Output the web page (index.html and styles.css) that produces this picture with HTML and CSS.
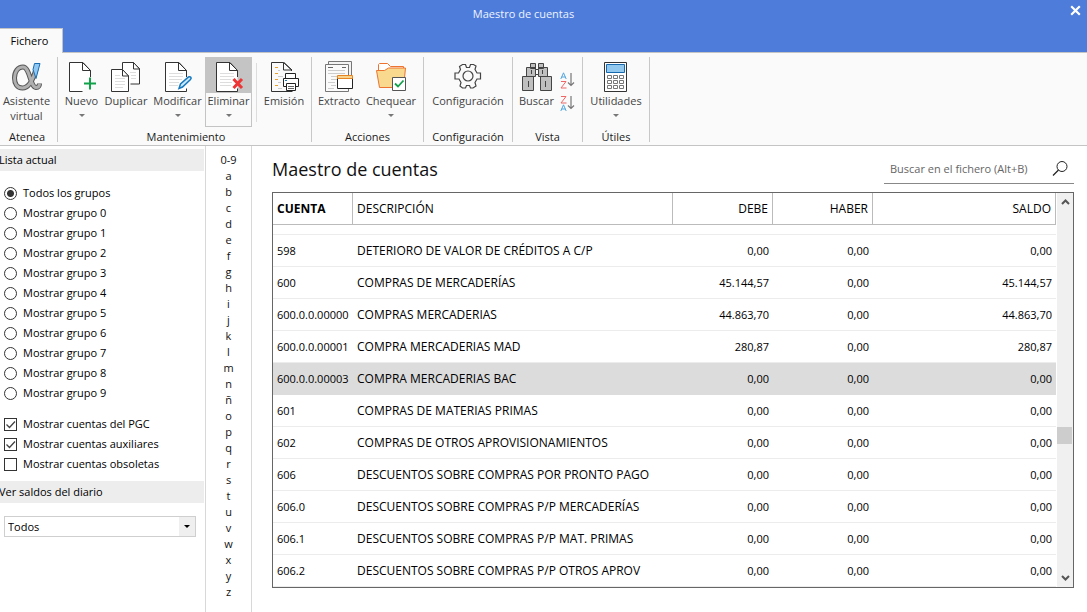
FILE: index.html
```html
<!DOCTYPE html>
<html lang="es">
<head>
<meta charset="utf-8">
<title>Maestro de cuentas</title>
<link rel="stylesheet" href="styles.css">
</head>
<body>
<header class="titlebar">
  <div class="titlebar-text">Maestro de cuentas</div>
  <button class="close" aria-label="Cerrar"><svg width="11" height="11" viewBox="0 0 11 11"><path d="M1.2 1.2l8.6 8.6M9.8 1.2L1.2 9.8" stroke="#fff" stroke-width="2.2" fill="none"/></svg></button>
  <button class="tab">Fichero</button>
</header>

<nav class="ribbon">
  <section class="group g-atenea">
    <div class="tools">
      <button class="tool">
        <svg width="32" height="32" viewBox="0 0 32 32" fill="none"><path d="M25 9C22 20 18 28 11.500 28C6 28 3.500 23.500 3.500 18C3.500 11.500 7 7 12 7C19 7 19 27 25 27.500C27.500 27.500 28.500 25.500 28.500 23.500" stroke="#555" stroke-width="5"/><path d="M25 9C22 20 18 28 11.500 28C6 28 3.500 23.500 3.500 18C3.500 11.500 7 7 12 7C19 7 19 27 25 27.500C27.500 27.500 28.500 25.500 28.500 23.500" stroke="#b0b0b0" stroke-width="3"/><path d="M23.500 3.500h5.500l-4 15-3-9z" fill="#8fc8f2" stroke="#1c6cb0"/></svg>
        <span>Asistente<br>virtual</span>
      </button>
    </div>
    <h2>Atenea</h2>
  </section>

  <section class="group g-mant">
    <div class="tools">
      <button class="tool t-nuevo">
        <svg width="32" height="32" viewBox="0 0 32 32" fill="none"><path d="M24.500 17V10.500L17 2.500H3.500v29h13" fill="#fff" stroke="#333"/><path d="M16.500 2.500v8h8M24.500 10.500l-8-8" stroke="#333"/><path d="M18 23.500h12M24 17.500v12" stroke="#12a14b" stroke-width="2"/></svg>
        <span>Nuevo</span><i class="arrow"></i>
      </button>
      <button class="tool t-duplicar">
        <svg width="32" height="32" viewBox="0 0 32 32" fill="none"><path d="M12.500 9V2.500h11l6 6v15.500h-9" fill="#fff" stroke="#333"/><path d="M23.500 2.500v6.500h6z" fill="#fff" stroke="#333"/><path d="M20 12.500h6M21 15.500h5M21 18.500h5" stroke="#ddd"/><path d="M1.500 9.500h11l6 6.500v15.500h-17z" fill="#fff" stroke="#333"/><path d="M12.500 9.500v6.500h6z" fill="#fff" stroke="#333"/><path d="M5 15.500h5M5 18.500h10M5 21.500h10M5 24.500h10M5 27.500h8" stroke="#ddd"/></svg>
        <span>Duplicar</span>
      </button>
      <button class="tool t-modificar">
        <svg width="32" height="32" viewBox="0 0 32 32" fill="none"><path d="M24.500 17V10.500L17 2.500H3.500v29h21v-3" fill="#fff" stroke="#333"/><path d="M16.500 2.500v8h8l-8-8" stroke="#333"/><path d="M7 13.500h14M7 16.500h14M7 19.500h13M7 22.500h10M7 25.500h9" stroke="#ddd"/><path d="M17 28.500l1.500-4.500 8-7c2-1 3.500 1 2 2.500l-8 7.500z" fill="#cbe8ff" stroke="#1679bd" stroke-width="1.500"/></svg>
        <span>Modificar</span><i class="arrow"></i>
      </button>
      <button class="tool t-eliminar">
        <svg width="32" height="32" viewBox="0 0 32 32" fill="none"><path d="M24.500 17V10.500L17 2.500H3.500v29h21v-3" fill="#fff" stroke="#333"/><path d="M16.500 2.500v8h8l-8-8" stroke="#333"/><path d="M7 13.500h14M7 16.500h14M7 19.500h11M7 22.500h12M7 25.500h11" stroke="#ddd"/><path d="M20.500 19l8.500 9M29 19l-8.500 9" stroke="#ee3535" stroke-width="3"/></svg>
        <span>Eliminar</span><i class="arrow"></i>
      </button>
      <div class="divider"></div>
      <button class="tool t-emision">
        <svg width="32" height="32" viewBox="0 0 32 32" fill="none"><path d="M23.500 11v-1L15.500 2.500H3.500v29h21" stroke="#333"/><path d="M15.500 2.500v7.500h8.500l-8-7.500" stroke="#333"/><path d="M7 7.500h3M7 13.500h3M7 19.500h3M7 25.500h3" stroke="#e9a02c"/><path d="M10 10.500h2M10 16.500h5M10 22.500h3M10 28.500h4" stroke="#ccc"/><path d="M17.500 19v-5.500h10V19M18.500 26.500h-3v-8h15v8h-3M18.500 23.500h9v7h-9z" fill="#fff" stroke="#222"/><path d="M20 26.500h6M20 28.500h6" stroke="#666"/><path d="M17 20.500h2" stroke="#1679bd"/></svg>
        <span>Emisión</span>
      </button>
    </div>
    <h2>Mantenimiento</h2>
  </section>

  <section class="group g-acc">
    <div class="tools">
      <button class="tool t-extracto">
        <svg width="32" height="32" viewBox="0 0 32 32" fill="none"><path d="M5.500 1.500h23v27h-23z" fill="#f3f3f3" stroke="#777"/><path d="M2.500 4.500h23v27h-23z" fill="#fafafa" stroke="#777"/><path d="M5 7.500h5M19 7.500h4" stroke="#666"/><path d="M5 10.500h17M5 13.500h17M8 16.500h6M8 19.500h6M5 22.500h7M8 25.500h5M5 28.500h6" stroke="#ccc"/><path d="M14.500 16.500h15v12h-15z" fill="#fff" stroke="#222"/><path d="M14.500 15.500h15v3h-15z" fill="#f8d38e" stroke="#e68523"/></svg>
        <span>Extracto</span>
      </button>
      <button class="tool t-chequear">
        <svg width="32" height="32" viewBox="0 0 32 32" fill="none"><path d="M3.500 10V4.500l1-1h8l3 3h13v4" fill="#fff" stroke="#ec7430"/><path d="M1.500 10.500h8l4-2.500h17l-2 19.500h-24z" fill="#f8d98e" stroke="#ec7430"/><path d="M17.500 17.500h13v13h-13z" fill="#fff" stroke="#555"/><path d="M20 23.500l3 3 5.500-6" stroke="#12a14b" stroke-width="1.800"/></svg>
        <span>Chequear</span><i class="arrow"></i>
      </button>
    </div>
    <h2>Acciones</h2>
  </section>

  <section class="group g-conf">
    <div class="tools">
      <button class="tool">
        <svg width="32" height="32" viewBox="0 0 32 32" fill="none" stroke="#444" stroke-width="1.200"><path d="M10.500 4.500h3l1 3h3l1-3h3l2.500 1.500-1 3.500 2 3.500h3.500v6h-3.500l-2 3.500 1 3.500-3 2h-2.500l-1-2.500h-3l-1 2.500h-3l-2.500-2 1-3.500-2-3.500H3v-6h3.500l2-3.500-1-3z"/><circle cx="16" cy="16" r="5"/></svg>
        <span>Configuración</span>
      </button>
    </div>
    <h2>Configuración</h2>
  </section>

  <section class="group g-vista">
    <div class="tools">
      <button class="tool t-buscar">
        <svg width="32" height="32" viewBox="0 0 32 32" fill="#bfbfbf" stroke="#444"><path d="M9.500 3.500h5v5h-5zM17.500 3.500h5v5h-5zM5.500 7.500h9v9h-9zM17.500 7.500h9v9h-9zM1.500 16.500h11v14h-11zM19.500 16.500h11v14h-11z"/><path d="M14.500 9.500h3v5h-3z" fill="#fff"/><path d="M10.500 10v4M21.500 10v4M7.500 21v6M24.500 21v6" fill="none"/></svg>
        <span>Buscar</span>
      </button>
      <div class="sorts">
        <button class="sort" aria-label="Orden ascendente"><svg width="15" height="17" viewBox="0 0 15 17" fill="none"><path d="M.8 7L3.500 .8 6.200 7M1.600 5h3.800" stroke="#53a5dc"/><path d="M1 9.500h5L1 16h5.500" stroke="#ee6666"/><path d="M11 1v12.500M8 10.500l3 3 3-3" stroke="#777" stroke-width="1.200"/></svg></button>
        <button class="sort" aria-label="Orden descendente"><svg width="15" height="17" viewBox="0 0 15 17" fill="none"><path d="M.8 16L3.500 9.800 6.200 16M1.600 14h3.800" stroke="#53a5dc"/><path d="M1 1.500h5L1 8h5.500" stroke="#ee6666"/><path d="M11 1v12.500M8 10.500l3 3 3-3" stroke="#777" stroke-width="1.200"/></svg></button>
      </div>
    </div>
    <h2>Vista</h2>
  </section>

  <section class="group g-util">
    <div class="tools">
      <button class="tool">
        <svg width="32" height="32" viewBox="0 0 32 32" fill="none"><path d="M4.500 2.500h22v29h-22z" fill="#fff" stroke="#333"/><path d="M6.500 4.500h18v8h-18z" fill="#93c8ee" stroke="#1769ad"/><path d="M7.500 15.500h4v3h-4zM13.500 15.500h4v3h-4zM19.500 15.500h4v3h-4zM7.500 20.500h4v3h-4zM13.500 20.500h4v3h-4zM19.500 20.500h4v3h-4zM7.500 25.500h4v3h-4zM13.500 25.500h4v3h-4zM19.500 25.500h4v3h-4z" stroke="#777"/></svg>
        <span>Utilidades</span><i class="arrow"></i>
      </button>
    </div>
    <h2>Útiles</h2>
  </section>
</nav>

<div class="body">
  <aside class="sidebar">
    <h3>Lista actual</h3>
    <div class="options">
      <label><input type="radio" name="grupo" checked>Todos los grupos</label>
      <label><input type="radio" name="grupo">Mostrar grupo 0</label>
      <label><input type="radio" name="grupo">Mostrar grupo 1</label>
      <label><input type="radio" name="grupo">Mostrar grupo 2</label>
      <label><input type="radio" name="grupo">Mostrar grupo 3</label>
      <label><input type="radio" name="grupo">Mostrar grupo 4</label>
      <label><input type="radio" name="grupo">Mostrar grupo 5</label>
      <label><input type="radio" name="grupo">Mostrar grupo 6</label>
      <label><input type="radio" name="grupo">Mostrar grupo 7</label>
      <label><input type="radio" name="grupo">Mostrar grupo 8</label>
      <label><input type="radio" name="grupo">Mostrar grupo 9</label>
    </div>
    <div class="options checks">
      <label><input type="checkbox" checked>Mostrar cuentas del PGC</label>
      <label><input type="checkbox" checked>Mostrar cuentas auxiliares</label>
      <label><input type="checkbox">Mostrar cuentas obsoletas</label>
    </div>
    <h3 id="saldos">Ver saldos del diario</h3>
    <div class="combo">
      <select aria-labelledby="saldos"><option>Todos</option></select>
      <span class="combo-arrow"></span>
    </div>
  </aside>

  <nav class="letters" aria-label="Índice">
    <a href="#">0-9</a><a href="#">a</a><a href="#">b</a><a href="#">c</a><a href="#">d</a><a href="#">e</a><a href="#">f</a><a href="#">g</a><a href="#">h</a><a href="#">i</a><a href="#">j</a><a href="#">k</a><a href="#">l</a><a href="#">m</a><a href="#">n</a><a href="#">ñ</a><a href="#">o</a><a href="#">p</a><a href="#">q</a><a href="#">r</a><a href="#">s</a><a href="#">t</a><a href="#">u</a><a href="#">v</a><a href="#">w</a><a href="#">x</a><a href="#">y</a><a href="#">z</a>
  </nav>

  <main class="main">
    <div class="main-head">
      <h1>Maestro de cuentas</h1>
      <div class="search">
        <input type="text" placeholder="Buscar en el fichero (Alt+B)" aria-label="Buscar en el fichero">
        <svg width="17" height="17" viewBox="0 0 17 17" fill="none" stroke="#222"><circle cx="10" cy="6.500" r="5"/><path d="M6.500 10L1 15.500" stroke-width="1.200"/></svg>
      </div>
    </div>
    <div class="grid">
      <table>
        <colgroup><col class="c-cuenta"><col class="c-desc"><col class="c-num"><col class="c-num"><col></colgroup>
        <thead>
          <tr><th class="sorted">CUENTA</th><th>DESCRIPCIÓN</th><th class="num">DEBE</th><th class="num">HABER</th><th class="num">SALDO</th></tr>
        </thead>
        <tbody>
          <tr class="cut"><td colspan="5"></td></tr>
          <tr><td>598</td><td>DETERIORO DE VALOR DE CRÉDITOS A C/P</td><td class="num">0,00</td><td class="num">0,00</td><td class="num">0,00</td></tr>
          <tr><td>600</td><td>COMPRAS DE MERCADERÍAS</td><td class="num">45.144,57</td><td class="num">0,00</td><td class="num">45.144,57</td></tr>
          <tr><td>600.0.0.00000</td><td>COMPRAS MERCADERIAS</td><td class="num">44.863,70</td><td class="num">0,00</td><td class="num">44.863,70</td></tr>
          <tr><td>600.0.0.00001</td><td>COMPRA MERCADERIAS MAD</td><td class="num">280,87</td><td class="num">0,00</td><td class="num">280,87</td></tr>
          <tr class="selected"><td>600.0.0.00003</td><td>COMPRA MERCADERIAS BAC</td><td class="num">0,00</td><td class="num">0,00</td><td class="num">0,00</td></tr>
          <tr><td>601</td><td>COMPRAS DE MATERIAS PRIMAS</td><td class="num">0,00</td><td class="num">0,00</td><td class="num">0,00</td></tr>
          <tr><td>602</td><td>COMPRAS DE OTROS APROVISIONAMIENTOS</td><td class="num">0,00</td><td class="num">0,00</td><td class="num">0,00</td></tr>
          <tr><td>606</td><td>DESCUENTOS SOBRE COMPRAS POR PRONTO PAGO</td><td class="num">0,00</td><td class="num">0,00</td><td class="num">0,00</td></tr>
          <tr><td>606.0</td><td>DESCUENTOS SOBRE COMPRAS P/P MERCADERÍAS</td><td class="num">0,00</td><td class="num">0,00</td><td class="num">0,00</td></tr>
          <tr><td>606.1</td><td>DESCUENTOS SOBRE COMPRAS P/P MAT. PRIMAS</td><td class="num">0,00</td><td class="num">0,00</td><td class="num">0,00</td></tr>
          <tr><td>606.2</td><td>DESCUENTOS SOBRE COMPRAS P/P OTROS APROV</td><td class="num">0,00</td><td class="num">0,00</td><td class="num">0,00</td></tr>
        </tbody>
      </table>
      <div class="scrollbar">
        <svg width="9" height="6" viewBox="0 0 9 6" fill="none" stroke="#555" stroke-width="2"><path d="M1 5l3.500-3.500L8 5"/></svg>
        <div class="track"><div class="space"></div><div class="thumb"></div></div>
        <svg width="9" height="6" viewBox="0 0 9 6" fill="none" stroke="#555" stroke-width="2"><path d="M1 1l3.500 3.500L8 1"/></svg>
      </div>
    </div>
  </main>
</div>
</body>
</html>
```

FILE: styles.css
```css
* { box-sizing: border-box; }
body {
  margin: 0;
  min-height: 100vh;
  display: flex;
  flex-direction: column;
  background: #fff;
  color: #000;
  font: 11px/16px "Open Sans", "Noto Sans", sans-serif;
}
h1, h2, h3 { margin: 0; font-weight: 400; }
button, input, select { font: inherit; color: inherit; }
button { margin: 0; padding: 0; border: 0; background: none; }

.titlebar {
  position: relative;
  display: flex;
  flex-direction: column;
  align-items: flex-start;
  background: #4d7cdb;
}
.titlebar-text {
  width: 100%;
  height: 28px;
  padding-right: 40px;
  line-height: 28px;
  text-align: center;
  color: #eef3ff;
}
.close { position: absolute; top: 5px; right: 6px; display: flex; }
.tab {
  width: 63px;
  height: 25px;
  padding-right: 3px;
  margin-bottom: -1px;
  border: 1px solid #c4c4c4;
  border-left: 0;
  border-bottom: 0;
  background: #fafafa;
  position: relative;
  z-index: 1;
}

.ribbon {
  display: flex;
  padding: 4px 0 3px;
  background: #fafafa;
  border-top: 1px solid #c4c4c4;
  border-bottom: 1px solid #c4c4c4;
}
.group {
  display: flex;
  flex-direction: column;
  border-right: 1px solid #c8c8c8;
}
.group h2 {
  margin-top: 4px;
  font-size: 11px;
  line-height: 10px;
  text-align: center;
  color: #1a1a1a;
}
.g-atenea { width: 58px; }
.g-atenea h2 { padding-right: 3px; }
.g-atenea .tool { width: 53px; }
.g-mant { width: 254px; padding-left: 3px; }
.g-acc { width: 112px; }
.g-conf { width: 89px; }
.g-vista { width: 70px; }
.g-util { width: 67px; }
.tools { display: flex; height: 71px; }
.tool {
  display: flex;
  flex-direction: column;
  align-items: center;
  flex: none;
  width: 100%;
  height: 70px;
  padding-top: 3px;
  line-height: 15px;
  color: #444;
}
.tool svg { display: block; flex: none; margin-bottom: 1px; }
.tool .arrow { margin-top: 6px; }
.arrow { border: 3px solid transparent; border-top-color: #777; border-bottom: 0; }
.t-nuevo { width: 41px; }
.t-duplicar { width: 48px; }
.t-modificar { width: 55px; }
.t-eliminar {
  width: 47px;
  border: 1px solid #c4c4c4;
  padding-top: 2px;
  background: linear-gradient(#c4c4c4 35px, #fafafa 35px);
}
.divider { width: 1px; margin: 6px 0 6px 4px; background: #ddd; }
.t-emision { width: 54px; }
.t-extracto { width: 54px; }
.t-chequear { width: 50px; }
.t-buscar { width: 47px; }
.sorts { display: flex; flex-direction: column; gap: 6px; padding-top: 15px; }
.sort { display: flex; }

.body { flex: 1; display: flex; }
.sidebar { flex: none; width: 206px; padding-top: 3px; border-right: 1px solid #d8d8d8; }
.sidebar h3 {
  height: 22px;
  margin-right: 1px;
  background: #ededed;
  font-size: 11px;
  line-height: 22px;
  text-indent: -1px;
}
.options { padding: 12px 4px 0; }
.checks { padding: 11px 4px 7px; }
.options label { display: flex; align-items: center; gap: 6px; height: 20px; }
.options input {
  appearance: none;
  width: 13px;
  height: 13px;
  margin: 0;
  border: 1px solid #333;
  background: #fff;
}
.options input[type="radio"] { border-radius: 50%; }
.options input[type="radio"]:checked { background: radial-gradient(circle, #333 3px, #fff 4px); }
.options input[type="checkbox"]:checked {
  background: url("data:image/svg+xml,%3Csvg xmlns='http://www.w3.org/2000/svg' viewBox='0 0 11 11'%3E%3Cpath d='M1.500 5.500l3 3 5.500-6' fill='none' stroke='%23444' stroke-width='1.300'/%3E%3C/svg%3E");
}
.combo { position: relative; margin: 13px 9px 0 4px; }
.combo select {
  appearance: none;
  display: block;
  width: 100%;
  height: 21px;
  padding: 0 20px 0 3px;
  border: 1px solid #cfcfcf;
  border-radius: 0;
  background: linear-gradient(#efefef, #efefef) right / 16px 100% no-repeat #fff;
}
.combo-arrow {
  position: absolute;
  right: 6px;
  top: 9px;
  border: 3px solid transparent;
  border-top-color: #000;
  border-bottom: 0;
  pointer-events: none;
}

.letters {
  flex: none;
  width: 46px;
  display: flex;
  flex-direction: column;
  align-items: center;
  padding-top: 6px;
  border-right: 1px solid #d8d8d8;
}
.letters a { height: 16px; color: #111; text-decoration: none; }

.main { flex: 1; min-width: 0; padding: 8px 13px 24px 20px; }
.main-head { display: flex; justify-content: space-between; height: 38px; }
h1 { font-size: 18px; line-height: 30px; color: #111; }
.search {
  display: flex;
  align-items: center;
  width: 190px;
  height: 30px;
  padding: 0 5px 0 6px;
  border-bottom: 1px solid #888;
}
.search input { flex: 1; min-width: 0; padding: 0; border: 0; outline: 0; background: none; }
.search input::placeholder { color: #666; opacity: 1; }

.grid { display: flex; border: 1px solid #666; }
table { flex: 1; border-collapse: separate; border-spacing: 0; table-layout: fixed; width: 0; font-size: 12px; }
.c-cuenta { width: 80px; }
.c-desc { width: 320px; }
.c-num { width: 100px; }
th, td { height: 32px; padding: 0 4px; text-align: left; white-space: nowrap; overflow: hidden; }
th { font-weight: 400; border-right: 1px solid #bbb; border-bottom: 1px solid #bbb; }
th.sorted { font-weight: 700; }
td { border-bottom: 1px solid #ececec; }
td:first-child { padding-right: 0; }
td:first-child, td.num { font-size: 11px; }
th.num, td.num { text-align: right; }
.cut td { height: 10px; padding: 0; }
.selected td { background: #dcdcdc; border-color: #dcdcdc; }
.scrollbar {
  display: flex;
  flex-direction: column;
  align-items: center;
  width: 16px;
  margin-left: 1px;
  padding: 6px 0;
  background: #f0f0f0;
}
.scrollbar svg { flex: none; }
.track { flex: 1; align-self: stretch; display: flex; flex-direction: column; }
.space { flex: 0 0 60%; }
.thumb { height: 17px; margin-right: 1px; background: #cdcdcd; }
```
